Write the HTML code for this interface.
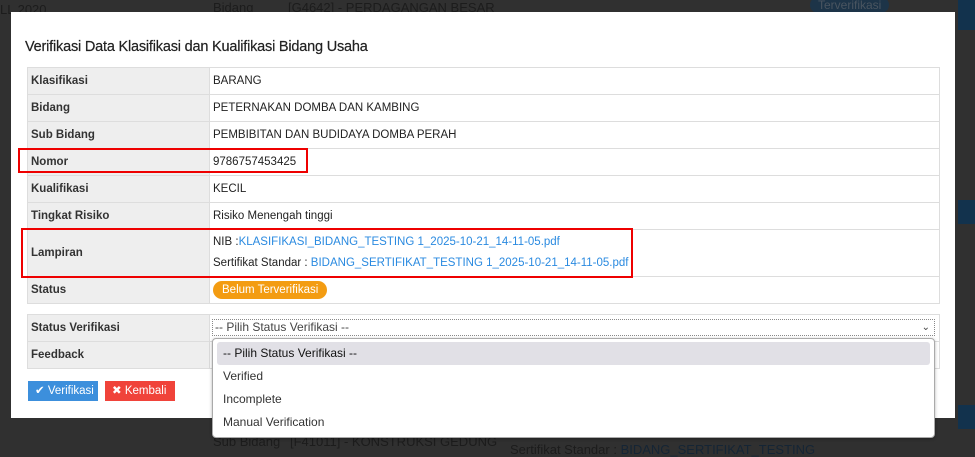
<!DOCTYPE html>
<html><head><meta charset="utf-8"><style>
*{box-sizing:border-box;margin:0;padding:0}
body{width:975px;height:454px;overflow:hidden;background:#303030;font-family:"Liberation Sans",Arial,sans-serif;position:relative;font-size:12px;color:#222}
.bg{position:absolute;color:#1c1c1c;font-size:13px}
.modal{position:absolute;left:11px;top:12px;width:944px;height:406px;background:#fff}
.title{position:absolute;left:14px;top:27px;font-size:14.5px;color:#222;letter-spacing:-0.2px;-webkit-text-stroke:0.2px #222}
table{position:absolute;border-collapse:collapse;left:16px;width:913px}
td{border:1px solid #ddd;height:27px;padding:0 3px;font-size:11.5px;vertical-align:middle}
td.l{background:#eee;font-weight:bold;width:182px;color:#333}
a{color:#2a8ae0;text-decoration:none}
.badge{display:inline-block;background:#f39c12;color:#fff;border-radius:9px;padding:3px 9px;font-size:11.5px}
.red{position:absolute;border:2px solid #e00}
.btn{position:absolute;top:369px;height:20px;color:#fff;font-size:11.5px;line-height:20px;padding-left:7px}
.sel{position:absolute;left:201px;top:307px;width:723px;height:17px;border:1px dotted #888;font-size:12px;color:#444;padding-left:2px;line-height:15px;background:#fff}
.dd{position:absolute;left:212px;top:338px;width:723px;height:100px;background:#fff;border:1px solid #aaa;border-radius:4px;box-shadow:0 1px 3px rgba(0,0,0,.3);font-size:12px;color:#333}
.dd div{height:23px;line-height:23px;padding-left:10px}
.dd .h{background:#e1e0e6;margin:3px 4px 0 4px;padding-left:6px;border-radius:3px;color:#111;height:23px}
</style></head><body>
<div class="bg" style="left:0;top:2px">LL 2020</div>
<div class="bg" style="left:213px;top:0">Bidang</div>
<div class="bg" style="left:288px;top:0">[G4642] - PERDAGANGAN BESAR</div>
<div class="bg" style="left:810px;top:-3px;background:#1d3448;color:#4a5560;border-radius:8px;padding:1px 8px;font-size:12px">Terverifikasi</div>
<div class="bg" style="left:958px;top:0;width:17px;height:30px;background:#12324d"></div>
<div class="bg" style="left:958px;top:200px;width:17px;height:24px;background:#12324d"></div>
<div class="bg" style="left:958px;top:405px;width:17px;height:24px;background:#12324d"></div>
<div class="bg" style="left:213px;top:434px">Sub Bidang</div>
<div class="bg" style="left:290px;top:434px">[F41011] - KONSTRUKSI GEDUNG</div>
<div class="bg" style="left:510px;top:442px">Sertifikat Standar : <span style="color:#152535">BIDANG_SERTIFIKAT_TESTING</span></div>
<div class="modal">
<div class="title">Verifikasi Data Klasifikasi dan Kualifikasi Bidang Usaha</div>
<table style="top:55px">
<tr><td class="l">Klasifikasi</td><td>BARANG</td></tr>
<tr><td class="l">Bidang</td><td>PETERNAKAN DOMBA DAN KAMBING</td></tr>
<tr><td class="l">Sub Bidang</td><td>PEMBIBITAN DAN BUDIDAYA DOMBA PERAH</td></tr>
<tr><td class="l">Nomor</td><td>9786757453425</td></tr>
<tr><td class="l">Kualifikasi</td><td>KECIL</td></tr>
<tr><td class="l">Tingkat Risiko</td><td>Risiko Menengah tinggi</td></tr>
<tr><td class="l" style="height:47px">Lampiran</td><td style="line-height:21px">NIB :<a>KLASIFIKASI_BIDANG_TESTING 1_2025-10-21_14-11-05.pdf</a><br>Sertifikat Standar : <a>BIDANG_SERTIFIKAT_TESTING 1_2025-10-21_14-11-05.pdf</a></td></tr>
<tr><td class="l">Status</td><td><span class="badge">Belum Terverifikasi</span></td></tr>
</table>
<table style="top:302px">
<tr><td class="l">Status Verifikasi</td><td></td></tr>
<tr><td class="l">Feedback</td><td></td></tr>
</table>
<div class="sel">-- Pilih Status Verifikasi --<span style="position:absolute;right:4px;top:0;font-size:10px">&#8964;</span></div>
<div class="btn" style="left:17px;width:70px;background:#3c8fdc">&#10004; Verifikasi</div>
<div class="btn" style="left:94px;width:70px;background:#f0433a">&#10006; Kembali</div>
</div>
<div class="red" style="left:18px;top:148px;width:290px;height:25px"></div>
<div class="red" style="left:21px;top:228px;width:612px;height:50px"></div>
<div class="dd">
<div class="h">-- Pilih Status Verifikasi --</div>
<div>Verified</div>
<div>Incomplete</div>
<div>Manual Verification</div>
</div>
</body></html>
